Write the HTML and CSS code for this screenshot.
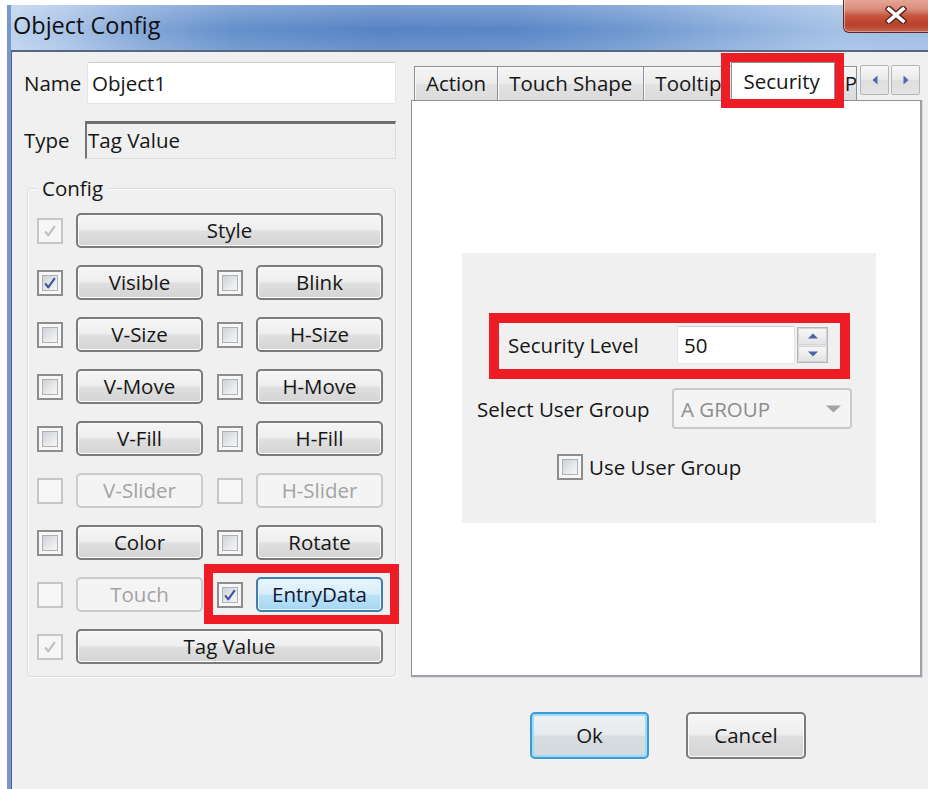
FILE: index.html
```html
<!DOCTYPE html>
<html lang="en">
<head>
<meta charset="utf-8">
<title>Object Config</title>
<link rel="stylesheet" href="styles.css">
</head>
<body>
<div class="window">
  <div class="titlebar">
    <span class="title">Object Config</span>
    <div class="close">
      <svg width="22" height="18" viewBox="0 0 22 18">
        <path class="x-shade" d="M4 3 L18 15 M18 3 L4 15"/>
        <path class="x-face" d="M4 3 L18 15 M18 3 L4 15"/>
      </svg>
    </div>
  </div>

  <div class="client">
    <!-- object identity and feature toggles -->
    <div class="left">
      <div class="field">
        <span class="lbl name-lbl">Name</span>
        <div class="edit">Object1</div>
      </div>
      <div class="field type">
        <span class="lbl type-lbl">Type</span>
        <div class="edit sunken">Tag Value</div>
      </div>

      <div class="group">
        <div class="legend">Config</div>

        <div class="row">
          <div class="pair">
            <span class="cb dis"><svg viewBox="0 0 16 16"><path d="M2.5 8.5 L6 13 L13.5 2.5"/></svg></span>
            <span class="btn">Style</span>
          </div>
        </div>
        <div class="row">
          <div class="pair">
            <span class="cb"><svg viewBox="0 0 16 16"><path d="M2.5 8.5 L6 13 L13.5 2.5"/></svg></span>
            <span class="btn">Visible</span>
          </div>
          <div class="pair">
            <span class="cb off"><svg viewBox="0 0 16 16"></svg></span>
            <span class="btn">Blink</span>
          </div>
        </div>
        <div class="row">
          <div class="pair">
            <span class="cb off"><svg viewBox="0 0 16 16"></svg></span>
            <span class="btn">V-Size</span>
          </div>
          <div class="pair">
            <span class="cb off"><svg viewBox="0 0 16 16"></svg></span>
            <span class="btn">H-Size</span>
          </div>
        </div>
        <div class="row">
          <div class="pair">
            <span class="cb off"><svg viewBox="0 0 16 16"></svg></span>
            <span class="btn">V-Move</span>
          </div>
          <div class="pair">
            <span class="cb off"><svg viewBox="0 0 16 16"></svg></span>
            <span class="btn">H-Move</span>
          </div>
        </div>
        <div class="row">
          <div class="pair">
            <span class="cb off"><svg viewBox="0 0 16 16"></svg></span>
            <span class="btn">V-Fill</span>
          </div>
          <div class="pair">
            <span class="cb off"><svg viewBox="0 0 16 16"></svg></span>
            <span class="btn">H-Fill</span>
          </div>
        </div>
        <div class="row">
          <div class="pair">
            <span class="cb dis off"><svg viewBox="0 0 16 16"></svg></span>
            <span class="btn dim">V-Slider</span>
          </div>
          <div class="pair">
            <span class="cb dis off"><svg viewBox="0 0 16 16"></svg></span>
            <span class="btn dim">H-Slider</span>
          </div>
        </div>
        <div class="row">
          <div class="pair">
            <span class="cb off"><svg viewBox="0 0 16 16"></svg></span>
            <span class="btn">Color</span>
          </div>
          <div class="pair">
            <span class="cb off"><svg viewBox="0 0 16 16"></svg></span>
            <span class="btn">Rotate</span>
          </div>
        </div>
        <div class="row">
          <div class="pair">
            <span class="cb dis off"><svg viewBox="0 0 16 16"></svg></span>
            <span class="btn dim">Touch</span>
          </div>
          <div class="pair marked entry">
            <span class="cb"><svg viewBox="0 0 16 16"><path d="M2.5 8.5 L6 13 L13.5 2.5"/></svg></span>
            <span class="btn hot">EntryData</span>
          </div>
        </div>
        <div class="row">
          <div class="pair">
            <span class="cb dis"><svg viewBox="0 0 16 16"><path d="M2.5 8.5 L6 13 L13.5 2.5"/></svg></span>
            <span class="btn">Tag Value</span>
          </div>
        </div>
      </div>
    </div>

    <!-- property pages -->
    <div class="right">
      <div class="tabbar">
        <div class="tabs">
          <span class="tab">Action</span>
          <span class="tab">Touch Shape</span>
          <span class="tab">Tooltip</span>
          <span class="tab active marked sec-tab">Security</span>
          <span class="tab cut">P</span>
        </div>
        <div class="scroller">
          <span class="sbtn"><svg width="6" height="10" viewBox="0 0 6 10"><path d="M5.5 0.5 L0.5 5 L5.5 9.5 Z"/></svg></span>
          <span class="sbtn"><svg width="6" height="10" viewBox="0 0 6 10"><path d="M0.5 0.5 L5.5 5 L0.5 9.5 Z"/></svg></span>
        </div>
      </div>

      <div class="panel">
        <div class="sec-box">
          <div class="sec-row marked">
            <span class="sec-lbl">Security Level</span>
            <div class="edit num">50</div>
            <div class="spinner">
              <span class="spin"><svg width="10" height="6" viewBox="0 0 10 6"><path d="M0 5.5 L5 0.5 L10 5.5 Z"/></svg></span>
              <span class="spin"><svg width="10" height="6" viewBox="0 0 10 6"><path d="M0 0.5 L5 5.5 L10 0.5 Z"/></svg></span>
            </div>
          </div>
          <div class="grp-row">
            <span class="grp-lbl">Select User Group</span>
            <div class="combo">
              <span>A GROUP</span>
              <svg width="15" height="8" viewBox="0 0 15 8"><path d="M0 0.5 L7.5 7.5 L15 0.5 Z"/></svg>
            </div>
          </div>
          <div class="use-row">
            <span class="cb off"><svg viewBox="0 0 16 16"></svg></span>
            <span>Use User Group</span>
          </div>
        </div>
      </div>

      <div class="actions">
        <span class="btn dlg default">Ok</span>
        <span class="btn dlg">Cancel</span>
      </div>
    </div>
  </div>
</div>
</body>
</html>
```

FILE: styles.css
```css
* { box-sizing: border-box; }

html, body { margin: 0; padding: 0; }

body {
  width: 928px;
  height: 789px;
  overflow: hidden;
  background: #fff;
  font-family: "Open Sans", "Noto Sans", sans-serif;
  font-size: 20.5px;
  color: #161616;
}

/* ---------- window frame ---------- */
.window {
  position: relative;
  margin: 5px 0 0 7px;
  height: 784px;
  display: flex;
  flex-direction: column;
  border-left: 4px solid #7698cf;
}

.titlebar {
  flex: none;
  height: 45px;
  display: flex;
  align-items: center;
  padding: 0 0 5px 2px;
  background:
    linear-gradient(to bottom, rgba(255,255,255,0.22), rgba(255,255,255,0) 55%, rgba(255,255,255,0.12)),
    linear-gradient(to right, #bdd2ed 0%, #a9c3e7 6%, #84a7d8 14%, #6590cb 24%, #5783c5 40%, #5a86c7 55%, #6f98d0 68%, #8dafdd 80%, #a3c0e6 90%, #9fbde4 100%);
}

.title {
  font-size: 23.5px;
  color: #0f0f0f;
}

.close {
  position: absolute;
  top: -5px;
  left: 832px;
  width: 110px;
  height: 33px;
  border: 1px solid #5b2a22;
  border-top: none;
  border-radius: 0 0 0 6px;
  background: linear-gradient(to bottom, #e7a597 0%, #d98a79 30%, #c6533f 50%, #b8402b 78%, #c56450 100%);
  box-shadow: inset 1px 0 0 rgba(255,255,255,0.45), inset 0 -1px 0 rgba(255,255,255,0.35);
  padding: 6px 0 0 41px;
}

.close svg { display: block; }
.x-shade { stroke: #5e2b24; stroke-width: 6.5; fill: none; stroke-linecap: square; }
.x-face  { stroke: #ffffff; stroke-width: 3.6; fill: none; stroke-linecap: square; }

.client {
  flex: 1;
  display: grid;
  grid-template-columns: 372px 511px;
  column-gap: 15px;
  align-items: start;
  padding: 10px 6px 0 12px;
  background: #f0f0f0;
  border-top: 2px solid #56677f;
  border-left: 1px solid #4d6388;
}

/* ---------- left column ---------- */
.field {
  display: flex;
  align-items: center;
  height: 42px;
}

.field.type {
  height: 38px;
  margin-top: 17px;
}

.name-lbl { width: 63px; }
.type-lbl { width: 61px; }

.edit {
  flex: 1;
  height: 100%;
  display: flex;
  align-items: center;
  padding-left: 4px;
  background: #fff;
  border: 1px solid #e2e6ea;
  border-top-color: #c9cdd2;
  border-radius: 2px;
}

.edit.sunken {
  background: #f0f0f0;
  border-radius: 0;
  border-width: 3px 1px 1px 2px;
  border-color: #6e6e6e #dcdcdc #dcdcdc #747474;
  padding-left: 1px;
  padding-bottom: 2px;
}

.group {
  margin: 29px 0 0 3px;
  padding: 0 12px 12px 9px;
  border: 1px solid #d3dde4;
  border-radius: 4px;
  box-shadow: inset 1px 1px 0 #fff, 1px 1px 0 #fbfbfb;
}

.legend {
  width: max-content;
  margin-top: -13px;
  padding: 0 5px;
  line-height: 24px;
  background: #f0f0f0;
}

.row {
  display: flex;
  gap: 14px;
  height: 35px;
  margin-top: 17px;
}

.legend + .row { margin-top: 13px; }

.pair {
  flex: 1;
  display: flex;
  align-items: center;
  gap: 13px;
}

.pair .btn { flex: 1; height: 35px; }

/* checkboxes */
.cb {
  flex: none;
  width: 26px;
  height: 26px;
  padding: 3px;
  border: 2px solid #8d8d8d;
  background: #f7f7f7;
  display: flex;
}

.cb svg {
  width: 100%;
  height: 100%;
  border: 1px solid #aeb2b7;
  background: linear-gradient(135deg, #cdd0d5 0%, #e6e8ea 55%, #f6f6f7 100%);
}

.cb path {
  fill: none;
  stroke: #3e539b;
  stroke-width: 2.4;
  stroke-linejoin: round;
}

.cb.dis { border-color: #c6c6c6; background: #f6f6f6; }
.cb.dis svg { border-color: #f6f6f6; background: #f6f6f6; }
.cb.dis path { stroke: #bdbdbd; }

/* push buttons */
.btn {
  display: flex;
  align-items: center;
  justify-content: center;
  border: 2px solid #7b7b7b;
  border-radius: 5px;
  background: linear-gradient(to bottom, #f6f6f6 0%, #eeeeee 48%, #dfdfdf 52%, #d4d4d4 100%);
  box-shadow: inset 0 0 0 1px #fbfbfb;
  color: #161616;
  white-space: nowrap;
  padding-bottom: 1px;
}

.btn.dim {
  border-color: #c9cbcd;
  background: #f4f4f4;
  box-shadow: none;
  color: #a3a3a3;
}

.btn.hot {
  border-color: #3f7fb0;
  background: linear-gradient(to bottom, #e9f5fc 0%, #d8eefb 48%, #bde3f8 52%, #a4d6f2 100%);
  box-shadow: inset 0 0 0 1px #e6f5fd;
  color: #101830;
}

/* annotation frames */
.marked { position: relative; }
.marked::after {
  content: "";
  position: absolute;
  border: 9px solid #ee1c24;
  pointer-events: none;
  z-index: 5;
}
.entry::after { top: -13px; right: -16px; bottom: -12px; left: -13px; }

/* ---------- right column ---------- */
.tabbar {
  display: flex;
  height: 38px;
}

.tabs {
  flex: 1;
  min-width: 0;
  display: flex;
  align-items: flex-end;
  padding-left: 3px;
}

.tab {
  flex: none;
  height: 34px;
  padding: 0 11px 1px 11px;
  display: flex;
  align-items: center;
  white-space: nowrap;
  border: 1px solid #8d9096;
  border-bottom: none;
  margin-left: -1px;
  background: linear-gradient(to bottom, #f5f5f5 0%, #ececec 50%, #e2e2e2 51%, #dcdcdc 100%);
  box-shadow: inset 1px 1px 0 #fafafa;
}

.tab:first-child { margin-left: 0; }

.tab.active {
  position: relative;
  z-index: 2;
  height: 39px;
  margin: 0 -2px -1px -3px;
  padding: 0 14px 3px 12px;
  background: #fff;
  box-shadow: none;
}

.sec-tab::after { top: -10px; right: -10px; bottom: -7px; left: -11px; }

.tab.cut {
  flex: 1 1 auto;
  min-width: 0;
  overflow: hidden;
  padding: 0 0 1px 12px;
  justify-content: flex-start;
}

.scroller {
  flex: none;
  display: flex;
  gap: 2px;
  margin: 3px 2px 0 3px;
  height: 30px;
}

.sbtn {
  width: 29px;
  height: 30px;
  display: flex;
  align-items: center;
  justify-content: center;
  border: 1px solid #b3b5b8;
  border-radius: 2px;
  background: linear-gradient(to bottom, #f7f7f7, #e9e9e9 50%, #dedede 51%, #e4e4e4);
}

.sbtn path { fill: #4d68b0; }

.panel {
  height: 577px;
  background: #fff;
  border: 1px solid #8d9096;
  border-right: 2px solid #9fa3a9;
  border-bottom: 2px solid #9fa3a9;
  box-shadow: 1px 1px 0 #d9dbdd;
  padding: 152px 0 0 50px;
}

.sec-box {
  width: 414px;
  height: 270px;
  background: #f0f0f0;
  padding-top: 73px;
}

.sec-row {
  width: max-content;
  display: flex;
  align-items: center;
  height: 38px;
  margin-left: 46px;
}

.sec-row::after { top: -13px; right: -22px; bottom: -15px; left: -19px; border-width: 10px; }

.sec-lbl { width: 169px; }

.edit.num {
  flex: none;
  width: 118px;
  height: 38px;
  padding-left: 6px;
}

.spinner {
  margin-left: 2px;
  width: 31px;
  height: 36px;
  display: flex;
  flex-direction: column;
  gap: 1px;
  border: 1px solid #b5b7ba;
  background: #e8e8e8;
}

.spin {
  flex: 1;
  display: flex;
  align-items: center;
  justify-content: center;
  border: 1px solid #d2d4d6;
  background: linear-gradient(to bottom, #f7f7f7, #e3e3e3);
}

.spin path { fill: #4a63ab; }

.grp-row {
  display: flex;
  align-items: center;
  height: 41px;
  margin: 24px 0 0 15px;
}

.grp-lbl { width: 195px; }

.combo {
  width: 180px;
  height: 41px;
  display: flex;
  align-items: center;
  justify-content: space-between;
  padding: 0 9px 0 7px;
  border: 2px solid #c9cacc;
  border-radius: 4px;
  background: #f4f4f4;
  color: #8c8c8c;
}

.combo path { fill: #a2a2a2; }

.use-row {
  display: flex;
  align-items: center;
  gap: 6px;
  margin: 24px 0 0 95px;
}

.actions {
  display: flex;
  gap: 37px;
  margin: 35px 0 0 119px;
}

.btn.dlg {
  width: 120px;
  height: 47px;
}

.btn.default {
  width: 119px;
  border-color: #3c9ad6;
  background: linear-gradient(to bottom, #eef1f3 0%, #e6eaed 48%, #d8dde1 52%, #d2d8dc 100%);
  box-shadow: inset 0 0 0 2px #9fdcf7;
}
```
